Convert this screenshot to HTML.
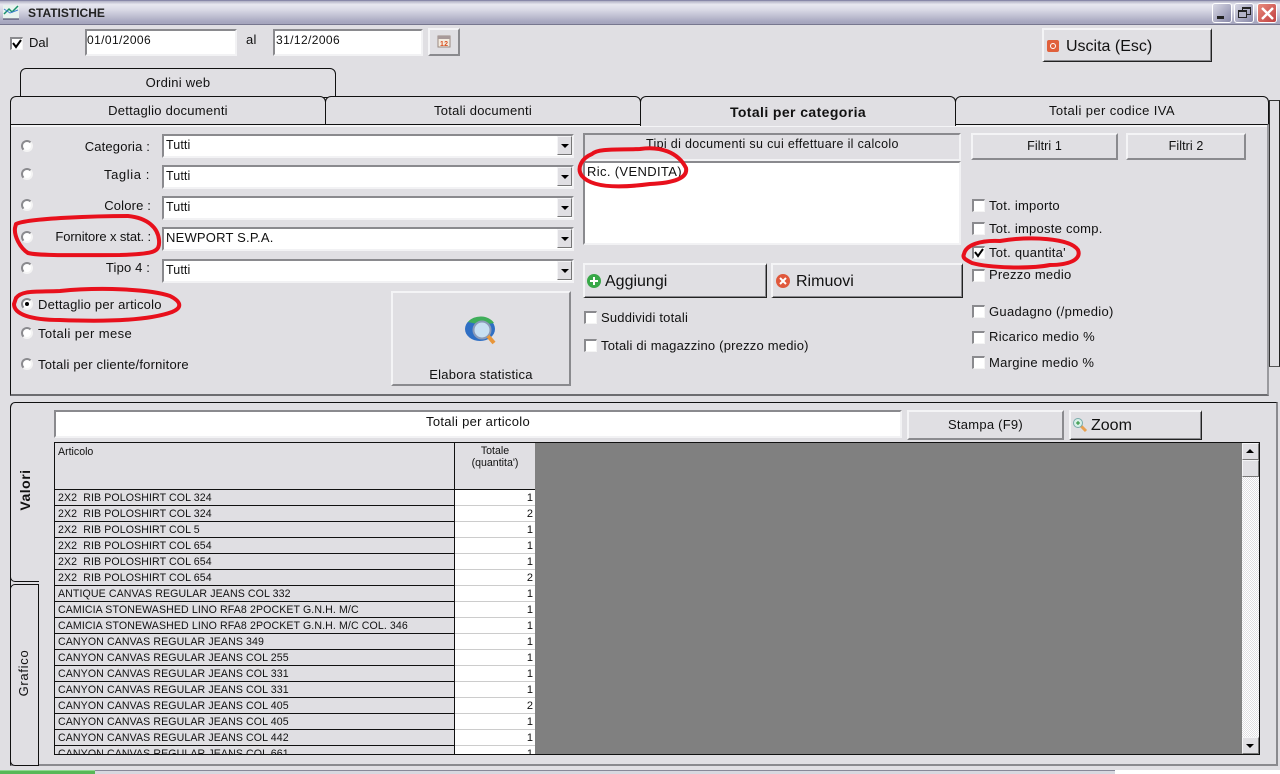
<!DOCTYPE html>
<html><head><meta charset="utf-8"><title>STATISTICHE</title>
<style>
html,body{margin:0;padding:0;width:1280px;height:774px;overflow:hidden;background:#e0dfe3}
body{position:relative;font-family:"Liberation Sans",sans-serif;font-size:13px;color:#111;letter-spacing:.25px}
div,span{position:absolute;box-sizing:border-box}
.t{white-space:nowrap;line-height:16px}
.big{font-size:16px;line-height:18px;letter-spacing:0}
.btn{background:#e0dfe3;border-top:2px solid #f4f4f6;border-left:2px solid #f4f4f6;border-right:2px solid #8a8a8e;border-bottom:2px solid #8a8a8e;text-align:center}
.btnd{background:#e0dfe3;border-top:2px solid #f4f4f6;border-left:2px solid #f4f4f6;border-right:1px solid #222;border-bottom:1px solid #222;box-shadow:inset -1px -1px 0 #8a8a8e}
.inp{background:#fff;border-top:2px solid #8a8a8e;border-left:2px solid #8a8a8e;border-right:2px solid #f2f2f4;border-bottom:2px solid #f2f2f4}
.tab{background:#e0dfe3;border:1px solid #111;border-radius:6px 6px 0 0;text-align:center;line-height:28px}
.cb{width:13px;height:13px;background:#fff;border-top:2px solid #8a8a8e;border-left:2px solid #8a8a8e;border-right:1px solid #f4f4f4;border-bottom:1px solid #f4f4f4}
.rd{width:12px;height:12px;border-radius:50%;background:#fff;border:2px solid #8a8a8e;border-right-color:#f4f4f4;border-bottom-color:#f4f4f4}
.ar{width:15px;height:19px;background:#e0dfe3;border-top:1px solid #f4f4f6;border-left:1px solid #f4f4f6;border-right:1px solid #777;border-bottom:1px solid #777}
.ar:after{content:"";position:absolute;left:3px;top:7px;border-left:4px solid transparent;border-right:4px solid transparent;border-top:4px solid #000}
.sb{left:1242px;width:17px;height:17px;background:#e0dfe3;border-top:1px solid #f4f4f6;border-left:1px solid #f4f4f6;border-right:1px solid #777;border-bottom:1px solid #777}
.row{left:0;width:400px;height:16px;border-bottom:1px solid #111;font-size:10.6px;letter-spacing:.1px;line-height:17px;padding-left:3px;white-space:nowrap;background:#e0dfe3;overflow:hidden}
.val{left:400px;width:80px;height:16px;background:#fff;border-bottom:1px solid #ccc;font-size:11px;letter-spacing:0;line-height:17px;text-align:right;padding-right:2px;overflow:hidden}
.c{font-size:12.5px;letter-spacing:.1px}
</style></head><body>

<!-- title bar -->
<div style="left:0;top:0;width:1280px;height:25px;background:linear-gradient(#b0b0c4 0,#e8e8f0 15%,#d8d8e4 40%,#a8a8c0 90%,#a4a4bc 100%);border-top:1px solid #8888a8;border-bottom:1px solid #77778f"></div>
<svg style="position:absolute;left:2px;top:4px" width="20" height="16" viewBox="0 0 20 16"><rect x="1" y="1" width="16" height="14" fill="#e8f2ee"/><path d="M2 10 L7 5 L10 8 L16 2" stroke="#19906a" fill="none" stroke-width="1.5"/><path d="M2 5 L8 9 L16 6" stroke="#3f7fd0" fill="none"/><path d="M1 15 H17" stroke="#335" /></svg>
<div class="t" style="left:28px;top:5px;font-size:12px;font-weight:bold;color:#222;letter-spacing:0">STATISTICHE</div>
<div style="left:1212px;top:3px;width:20px;height:20px;border-radius:3px;border:1px solid #fff;background:linear-gradient(135deg,#d8d8e4,#8888a8)"><div style="left:4px;top:12px;width:7px;height:3px;background:#222"></div></div>
<div style="left:1234px;top:3px;width:20px;height:20px;border-radius:3px;border:1px solid #fff;background:linear-gradient(135deg,#d8d8e4,#8888a8)"><div style="left:7px;top:3px;width:9px;height:8px;border:1px solid #222;border-top-width:2px"></div><div style="left:3px;top:6px;width:9px;height:8px;border:1px solid #222;border-top-width:2px;background:#b4b4c8"></div></div>
<div style="left:1257px;top:3px;width:20px;height:20px;border-radius:3px;border:1px solid #fff;background:linear-gradient(135deg,#e88a7c,#c04040)"><svg style="position:absolute;left:3px;top:3px" width="13" height="13"><path d="M1 1 L12 12 M12 1 L1 12" stroke="#fff" stroke-width="2.4"/></svg></div>

<!-- top row -->
<div class="cb" style="left:10px;top:37px"><svg style="position:absolute;left:0;top:0" width="10" height="10"><path d="M1 4 L4 8 L9 1" stroke="#000" stroke-width="2" fill="none"/></svg></div>
<div class="t" style="left:29px;top:35px;letter-spacing:0">Dal</div>
<div class="inp" style="left:85px;top:29px;width:152px;height:27px"></div>
<div class="t" style="left:87px;top:32px;font-size:12px;letter-spacing:.4px">01/01/2006</div>
<div class="t" style="left:246px;top:32px">al</div>
<div class="inp" style="left:273px;top:29px;width:150px;height:27px"></div>
<div class="t" style="left:276px;top:32px;font-size:12px;letter-spacing:.4px">31/12/2006</div>
<div class="btn" style="left:428px;top:28px;width:32px;height:28px"></div>
<svg style="position:absolute;left:437px;top:34px" width="14" height="14"><rect x="1" y="2" width="12" height="11" fill="#f4ece0" stroke="#9a8a80"/><rect x="1" y="2" width="12" height="3" fill="#a89a9a"/><text x="3" y="12" font-size="7" font-weight="bold" font-family="Liberation Sans" fill="#d85020">12</text></svg>
<div class="btnd" style="left:1042px;top:28px;width:170px;height:34px"></div>
<div style="left:1047px;top:40px;width:12px;height:12px;background:#e0603c;border-radius:2px"><div style="left:3px;top:3px;width:6px;height:6px;border:1px solid #fff;border-radius:50%"></div></div>
<div class="t big" style="left:1066px;top:38px">Uscita (Esc)</div>

<!-- tabs -->
<div style="left:1269px;top:100px;width:11px;height:267px;border-right:1px solid #222;border-left:1px solid #333;border-top:1px solid #333;border-bottom:1px solid #555"></div>
<div class="tab" style="left:20px;top:68px;width:316px;height:30px">Ordini web</div>
<div class="tab" style="left:10px;top:96px;width:316px;height:30px">Dettaglio documenti</div>
<div class="tab" style="left:325px;top:96px;width:316px;height:30px">Totali documenti</div>
<div class="tab" style="left:955px;top:96px;width:314px;height:30px;letter-spacing:.4px">Totali per codice IVA</div>

<!-- upper panel -->
<div style="left:10px;top:124px;width:1259px;height:272px;background:#e0dfe3;border-top:1px solid #111;border-left:1px solid #111;border-right:2px solid #9a9a9e;border-bottom:2px solid #6c6c70"></div>
<div class="tab" style="left:640px;top:96px;width:316px;height:30px;border-bottom:0;font-weight:bold;font-size:14px;letter-spacing:.4px;line-height:30px;z-index:2">Totali per categoria</div>
<div style="left:11px;top:125px;width:1256px;height:2px;background:#f4f4f6"></div>

<!-- radios + labels -->
<div class="rd" style="left:21px;top:140px"></div><div class="t" style="right:1130px;top:139px;letter-spacing:.15px">Categoria :</div>
<div class="rd" style="left:21px;top:168px"></div><div class="t" style="right:1130px;top:167px;letter-spacing:.6px">Taglia :</div>
<div class="rd" style="left:21px;top:199px"></div><div class="t" style="right:1129px;top:198px;letter-spacing:.15px">Colore :</div>
<div class="rd" style="left:21px;top:231px"></div><div class="t" style="right:1129px;top:229px;letter-spacing:-.1px">Fornitore x stat. :</div>
<div class="rd" style="left:21px;top:262px"></div><div class="t" style="right:1130px;top:260px;letter-spacing:.15px">Tipo 4 :</div>
<div class="rd" style="left:21px;top:298px"><div style="left:2px;top:2px;width:4px;height:4px;background:#000;border-radius:50%"></div></div><div class="t" style="left:38px;top:297px;letter-spacing:.2px">Dettaglio per articolo</div>
<div class="rd" style="left:21px;top:327px"></div><div class="t" style="left:38px;top:326px;letter-spacing:.4px">Totali per mese</div>
<div class="rd" style="left:21px;top:358px"></div><div class="t" style="left:38px;top:357px;letter-spacing:.2px">Totali per cliente/fornitore</div>

<!-- combos -->
<div class="inp" style="left:162px;top:134px;width:412px;height:24px"></div><div class="ar" style="left:557px;top:136px"></div><div class="t c" style="left:166px;top:137px">Tutti</div>
<div class="inp" style="left:162px;top:165px;width:412px;height:24px"></div><div class="ar" style="left:557px;top:167px"></div><div class="t c" style="left:166px;top:168px">Tutti</div>
<div class="inp" style="left:162px;top:196px;width:412px;height:24px"></div><div class="ar" style="left:557px;top:198px"></div><div class="t c" style="left:166px;top:199px">Tutti</div>
<div class="inp" style="left:162px;top:227px;width:412px;height:24px"></div><div class="ar" style="left:557px;top:229px"></div><div class="t" style="left:166px;top:230px;letter-spacing:.2px">NEWPORT S.P.A.</div>
<div class="inp" style="left:162px;top:259px;width:412px;height:24px"></div><div class="ar" style="left:557px;top:261px"></div><div class="t c" style="left:166px;top:262px">Tutti</div>

<!-- elabora -->
<div class="btn" style="left:391px;top:291px;width:180px;height:95px"></div>
<svg style="position:absolute;left:464px;top:314px" width="36" height="34" viewBox="0 0 36 34"><ellipse cx="16" cy="15" rx="15" ry="12" fill="#2f6fc4"/><path d="M4 8 A15 12 0 0 1 30 9 L18 11Z" fill="#3fae5a"/><circle cx="18" cy="16" r="8.5" fill="#c8dff2" stroke="#8a9ab8" stroke-width="2"/><path d="M24 22 L30 29" stroke="#e8963a" stroke-width="4"/></svg>
<div class="t" style="left:391px;top:367px;width:180px;text-align:center">Elabora statistica</div>

<!-- document list -->
<div class="inp" style="left:583px;top:133px;width:378px;height:28px;background:#e0dfe3"></div>
<div class="t" style="left:646px;top:136px;font-size:12.5px;letter-spacing:.33px">Tipi di documenti su cui effettuare il calcolo</div>
<div class="inp" style="left:583px;top:161px;width:378px;height:84px"></div>
<div class="t" style="left:587px;top:164px;letter-spacing:.35px">Ric. (VENDITA)</div>
<div class="btnd" style="left:583px;top:263px;width:184px;height:35px"></div>
<div style="left:587px;top:274px;width:14px;height:14px;border-radius:50%;background:#38a848"><div style="left:3px;top:6px;width:8px;height:2px;background:#fff"></div><div style="left:6px;top:3px;width:2px;height:8px;background:#fff"></div></div>
<div class="t big" style="left:605px;top:273px">Aggiungi</div>
<div class="btnd" style="left:771px;top:263px;width:192px;height:35px"></div>
<div style="left:776px;top:274px;width:14px;height:14px;border-radius:50%;background:#e0583c"><svg style="position:absolute;left:3px;top:3px" width="8" height="8"><path d="M1 1 L7 7 M7 1 L1 7" stroke="#fff" stroke-width="2"/></svg></div>
<div class="t big" style="left:796px;top:273px">Rimuovi</div>
<div class="cb" style="left:584px;top:311px"></div><div class="t" style="left:601px;top:310px;letter-spacing:.2px">Suddividi totali</div>
<div class="cb" style="left:584px;top:339px"></div><div class="t" style="left:601px;top:338px;letter-spacing:.2px">Totali di magazzino (prezzo medio)</div>

<!-- filters -->
<div class="btn" style="left:971px;top:133px;width:147px;height:27px;font-size:12.5px;letter-spacing:.1px;line-height:23px">Filtri 1</div>
<div class="btn" style="left:1126px;top:133px;width:120px;height:27px;font-size:12.5px;letter-spacing:.1px;line-height:23px">Filtri 2</div>
<div class="cb" style="left:972px;top:199px"></div><div class="t" style="left:989px;top:198px">Tot. importo</div>
<div class="cb" style="left:972px;top:222px"></div><div class="t" style="left:989px;top:221px">Tot. imposte comp.</div>
<div class="cb" style="left:972px;top:246px"><svg style="position:absolute;left:0;top:0" width="10" height="10"><path d="M1 4 L4 8 L9 1" stroke="#000" stroke-width="2" fill="none"/></svg></div><div class="t" style="left:989px;top:245px">Tot. quantita'</div>
<div class="cb" style="left:972px;top:269px"></div><div class="t" style="left:989px;top:267px">Prezzo medio</div>
<div class="cb" style="left:972px;top:305px"></div><div class="t" style="left:989px;top:304px;letter-spacing:.3px">Guadagno (/pmedio)</div>
<div class="cb" style="left:972px;top:331px"></div><div class="t" style="left:989px;top:329px;letter-spacing:.3px">Ricarico medio %</div>
<div class="cb" style="left:972px;top:356px"></div><div class="t" style="left:989px;top:355px;letter-spacing:.27px">Margine medio %</div>

<!-- lower panel -->
<div style="left:10px;top:402px;width:1268px;height:364px;background:#e0dfe3;border-top:1px solid #111;border-left:1px solid #111;border-right:2px solid #8a8a8e;border-bottom:2px solid #8a8a8e;border-radius:5px 0 0 0"></div>
<div style="left:10px;top:403px;width:29px;height:179px;border-left:1px solid #111;border-bottom:1px solid #111;border-radius:5px 0 0 5px;background:#e0dfe3"></div>
<div style="left:10px;top:584px;width:29px;height:182px;border:1px solid #111;border-radius:5px 0 0 5px;background:#e0dfe3"></div>
<div class="t" style="left:17px;top:482px;width:16px;height:16px;font-weight:bold;font-size:14px;letter-spacing:.5px;transform:rotate(-90deg);line-height:16px;display:flex;justify-content:center">Valori</div>
<div class="t" style="left:16px;top:665px;width:16px;height:16px;letter-spacing:.7px;transform:rotate(-90deg);line-height:16px;display:flex;justify-content:center">Grafico</div>

<div class="inp" style="left:54px;top:410px;width:848px;height:28px"></div>
<div class="t" style="left:54px;top:414px;width:848px;text-align:center;letter-spacing:.3px">Totali per articolo</div>
<div class="btn" style="left:907px;top:410px;width:157px;height:30px;line-height:26px">Stampa (F9)</div>
<div class="btnd" style="left:1069px;top:410px;width:133px;height:30px"></div>
<svg style="position:absolute;left:1072px;top:417px" width="16" height="16"><path d="M9 9 L14 14" stroke="#e8a050" stroke-width="3"/><circle cx="6" cy="6" r="4.5" fill="#d8f0e8" stroke="#7aa" /><path d="M4 6 H8 M6 4 V8" stroke="#208a30"/></svg>
<div class="t big" style="left:1091px;top:417px">Zoom</div>

<!-- table -->
<div style="left:54px;top:442px;width:1206px;height:313px;background:#808080;border:1px solid #111;overflow:hidden"></div>
<div style="left:55px;top:443px;width:400px;height:47px;background:#e0dfe3;border-bottom:1px solid #111;font-size:10.6px;letter-spacing:0;padding:2px 0 0 3px;line-height:14px">Articolo</div>
<div style="left:455px;top:443px;width:80px;height:47px;background:#e0dfe3;border-bottom:1px solid #111;font-size:10.6px;letter-spacing:0;text-align:center;padding-top:2px;line-height:12px">Totale<br>(quantita')</div>

<div style="left:55px;top:490px;width:480px;height:264px;overflow:hidden;background:#fff">
<div class="row" style="top:0">2X2&nbsp; RIB POLOSHIRT COL 324</div><div class="val" style="top:0">1</div>
<div class="row" style="top:16px">2X2&nbsp; RIB POLOSHIRT COL 324</div><div class="val" style="top:16px">2</div>
<div class="row" style="top:32px">2X2&nbsp; RIB POLOSHIRT COL 5</div><div class="val" style="top:32px">1</div>
<div class="row" style="top:48px">2X2&nbsp; RIB POLOSHIRT COL 654</div><div class="val" style="top:48px">1</div>
<div class="row" style="top:64px">2X2&nbsp; RIB POLOSHIRT COL 654</div><div class="val" style="top:64px">1</div>
<div class="row" style="top:80px">2X2&nbsp; RIB POLOSHIRT COL 654</div><div class="val" style="top:80px">2</div>
<div class="row" style="top:96px">ANTIQUE CANVAS REGULAR JEANS COL 332</div><div class="val" style="top:96px">1</div>
<div class="row" style="top:112px">CAMICIA STONEWASHED LINO RFA8 2POCKET G.N.H. M/C</div><div class="val" style="top:112px">1</div>
<div class="row" style="top:128px">CAMICIA STONEWASHED LINO RFA8 2POCKET G.N.H. M/C COL. 346</div><div class="val" style="top:128px">1</div>
<div class="row" style="top:144px">CANYON CANVAS REGULAR JEANS 349</div><div class="val" style="top:144px">1</div>
<div class="row" style="top:160px">CANYON CANVAS REGULAR JEANS COL 255</div><div class="val" style="top:160px">1</div>
<div class="row" style="top:176px">CANYON CANVAS REGULAR JEANS COL 331</div><div class="val" style="top:176px">1</div>
<div class="row" style="top:192px">CANYON CANVAS REGULAR JEANS COL 331</div><div class="val" style="top:192px">1</div>
<div class="row" style="top:208px">CANYON CANVAS REGULAR JEANS COL 405</div><div class="val" style="top:208px">2</div>
<div class="row" style="top:224px">CANYON CANVAS REGULAR JEANS COL 405</div><div class="val" style="top:224px">1</div>
<div class="row" style="top:240px">CANYON CANVAS REGULAR JEANS COL 442</div><div class="val" style="top:240px">1</div>
<div class="row" style="top:256px">CANYON CANVAS REGULAR JEANS COL 661</div><div class="val" style="top:256px">1</div>
</div>
<div style="left:454px;top:443px;width:1px;height:311px;background:#111"></div>

<!-- scrollbar -->
<div style="left:1242px;top:443px;width:17px;height:311px;background:repeating-conic-gradient(#e0dfe3 0 25%,#fff 0 50%) 0 0/2px 2px"></div>
<div class="sb" style="top:443px"></div>
<div style="left:1246px;top:449px;border-left:4px solid transparent;border-right:4px solid transparent;border-bottom:4px solid #000"></div>
<div class="sb" style="top:460px"></div>
<div class="sb" style="top:737px"></div>
<div style="left:1246px;top:744px;border-left:4px solid transparent;border-right:4px solid transparent;border-top:4px solid #000"></div>

<!-- taskbar -->
<div style="left:0;top:770px;width:1115px;height:4px;background:#d8d8e0;border-top:1px solid #888898"></div>
<div style="left:0;top:770px;width:95px;height:4px;background:#58b858;border-top:1px solid #90d890"></div>
<div style="left:1115px;top:770px;width:165px;height:4px;background:#fff"></div>

<!-- red annotations -->
<svg style="position:absolute;left:0;top:0;z-index:5;pointer-events:none" width="1280" height="774" fill="none" stroke="#e8101c" stroke-width="4" stroke-linecap="round" stroke-linejoin="round">
<path d="M16 224 C28 218 100 216 128 216 C148 218 158 228 159 240 C160 252 155 254 120 255 C80 255 40 256 28 253 C20 248 14 236 15 228Z"/>
<path d="M16 298 C22 290 36 292 60 291 C100 287 150 289 170 296 C182 302 182 308 172 312 C150 320 110 322 60 320 C30 320 14 314 14 304Z"/>
<path d="M592 154 C598 148 620 150 640 149 C660 146 678 152 686 168 C688 178 674 183 650 184 C620 188 592 188 582 176 C576 168 582 158 592 154Z"/>
<path d="M964 254 C966 245 980 240 1000 241 C1030 236 1070 238 1078 250 C1082 260 1068 265 1050 265 C1030 269 990 268 972 263 C966 260 962 258 964 254Z"/>
</svg>
</body></html>
